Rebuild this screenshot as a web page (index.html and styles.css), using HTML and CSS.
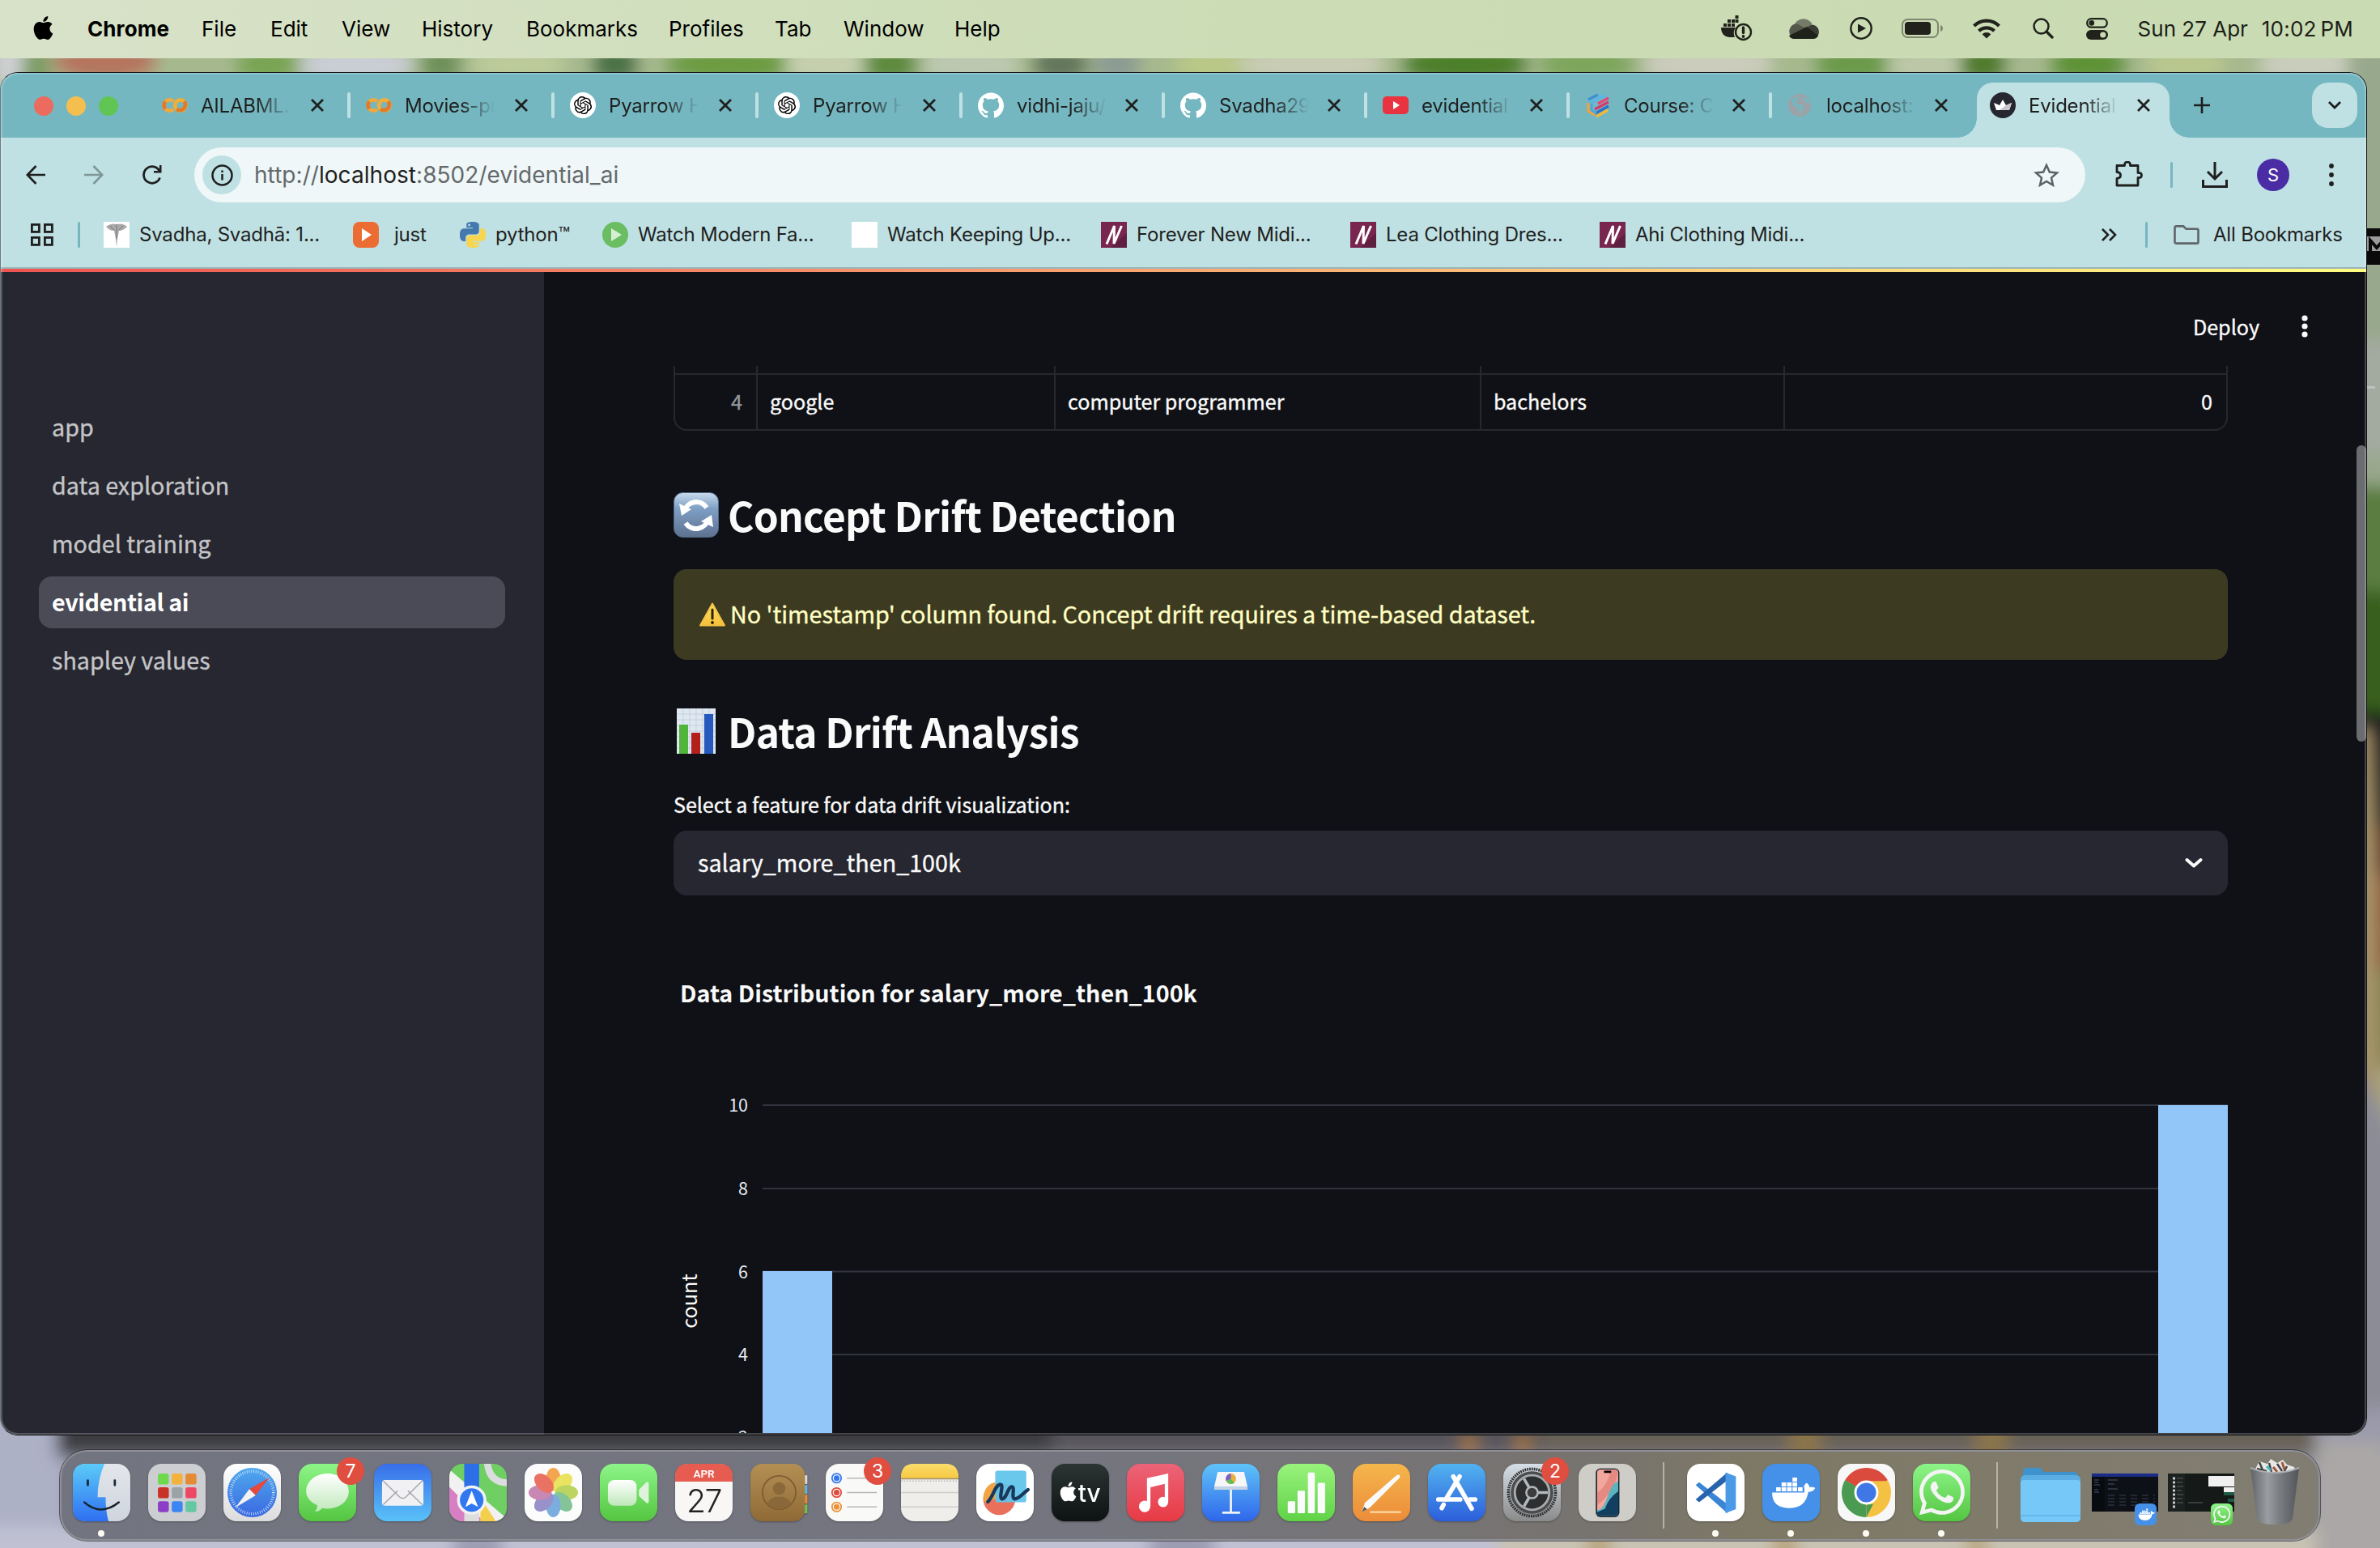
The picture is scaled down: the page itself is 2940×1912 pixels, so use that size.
FILE: index.html
```html
<!DOCTYPE html>
<html lang="en">
<head>
<meta charset="utf-8">
<title>Evidential AI</title>
<link rel="stylesheet" href="styles.css">
</head>
<body>
<svg class="defs" width="0" height="0" aria-hidden="true">
  <defs>
    <linearGradient id="gGreen" x2="0" y2="1"><stop stop-color="#8df588"/><stop offset="1" stop-color="#54c541"/></linearGradient>
    <linearGradient id="gMail" x2="0" y2="1"><stop stop-color="#386ee9"/><stop offset="1" stop-color="#5ac2f8"/></linearGradient>
    <linearGradient id="gFinder" x2="0" y2="1"><stop stop-color="#5bcbf8"/><stop offset="1" stop-color="#2f6ff2"/></linearGradient>
    <linearGradient id="gFace" x2="0" y2="1"><stop stop-color="#e3e6ea"/><stop offset="1" stop-color="#ced5de"/></linearGradient>
    <linearGradient id="gWhite" x2="0" y2="1"><stop stop-color="#ffffff"/><stop offset="1" stop-color="#dcdcdc"/></linearGradient>
    <linearGradient id="gBubble" x2="0" y2="1"><stop stop-color="#ffffff"/><stop offset="1" stop-color="#bfe8ba"/></linearGradient>
    <linearGradient id="gSafari" x2="0" y2="1"><stop stop-color="#4fa9ee"/><stop offset="1" stop-color="#3a68e0"/></linearGradient>
    <linearGradient id="gTan" x2="0" y2="1"><stop stop-color="#b48f54"/><stop offset="1" stop-color="#8f6a36"/></linearGradient>
    <linearGradient id="gTv" x2="0" y2="1"><stop stop-color="#2b3533"/><stop offset="1" stop-color="#0e1213"/></linearGradient>
    <linearGradient id="gMusic" x2="0" y2="1"><stop stop-color="#ec6478"/><stop offset="1" stop-color="#e73a44"/></linearGradient>
    <linearGradient id="gKeynote" x2="0" y2="1"><stop stop-color="#5fc3f9"/><stop offset="1" stop-color="#2f66ea"/></linearGradient>
    <linearGradient id="gNumbers" x2="0" y2="1"><stop stop-color="#99f37c"/><stop offset="1" stop-color="#5fd247"/></linearGradient>
    <linearGradient id="gPages" x2="0" y2="1"><stop stop-color="#f5b64c"/><stop offset="1" stop-color="#ec8c39"/></linearGradient>
    <linearGradient id="gStore" x2="0" y2="1"><stop stop-color="#52b3f0"/><stop offset="1" stop-color="#2c5edb"/></linearGradient>
    <linearGradient id="gGear" x2="0" y2="1"><stop stop-color="#d6dfe6"/><stop offset="1" stop-color="#8a8a8a"/></linearGradient>
    <linearGradient id="gNotes" x2="0" y2="1"><stop stop-color="#fbdd6c"/><stop offset="1" stop-color="#f5c740"/></linearGradient>
    <linearGradient id="gTrash" x2="1" y2="0"><stop stop-color="#5f6367"/><stop offset=".35" stop-color="#9a9ea2"/><stop offset=".6" stop-color="#7a7e82"/><stop offset="1" stop-color="#515559"/></linearGradient>
    <linearGradient id="gRefresh" x2="0" y2="1"><stop stop-color="#c9dbec"/><stop offset=".35" stop-color="#7fa0c6"/><stop offset="1" stop-color="#5e7190"/></linearGradient>
    <linearGradient id="gWarn" x2="0" y2="1"><stop stop-color="#fde06a"/><stop offset="1" stop-color="#f6c036"/></linearGradient>
    <filter id="soft" x="-20%" y="-20%" width="140%" height="140%"><feGaussianBlur stdDeviation="10"/></filter>

    <symbol id="close" viewBox="0 0 16 16"><path d="M1 1l14 14M15 1L1 15" stroke="#1f1f1f" stroke-width="2.800" fill="none"/></symbol>
    <symbol id="github" viewBox="0 0 24 24"><path fill="#fff" d="M12 .297c-6.63 0-12 5.373-12 12 0 5.303 3.438 9.8 8.205 11.385.6.113.82-.258.82-.577 0-.285-.01-1.04-.015-2.04-3.338.724-4.042-1.61-4.042-1.61C4.422 18.07 3.633 17.7 3.633 17.7c-1.087-.744.084-.729.084-.729 1.205.084 1.838 1.236 1.838 1.236 1.07 1.835 2.809 1.305 3.495.998.108-.776.417-1.305.76-1.605-2.665-.3-5.466-1.332-5.466-5.93 0-1.31.465-2.38 1.235-3.22-.135-.303-.54-1.523.105-3.176 0 0 1.005-.322 3.3 1.23.96-.267 1.98-.399 3-.405 1.02.006 2.04.138 3 .405 2.28-1.552 3.285-1.23 3.285-1.23.645 1.653.24 2.873.12 3.176.765.84 1.23 1.91 1.23 3.22 0 4.61-2.805 5.625-5.475 5.92.42.36.81 1.096.81 2.22 0 1.606-.015 2.896-.015 3.286 0 .315.21.69.825.57C20.565 22.092 24 17.592 24 12.297c0-6.627-5.373-12-12-12"/></symbol>
    <symbol id="openai" viewBox="0 0 32 32"><circle cx="16" cy="16" r="16" fill="#fff"/><g transform="translate(5 5) scale(.92)"><path d="M22.2819 9.8211a5.9847 5.9847 0 0 0-.5157-4.9108 6.0462 6.0462 0 0 0-6.5098-2.9A6.0651 6.0651 0 0 0 4.9807 4.1818a5.9847 5.9847 0 0 0-3.9977 2.9 6.0462 6.0462 0 0 0 .7427 7.0966 5.98 5.98 0 0 0 .511 4.9107 6.051 6.051 0 0 0 6.5146 2.9001A5.9847 5.9847 0 0 0 13.2599 24a6.0557 6.0557 0 0 0 5.7718-4.2058 5.9894 5.9894 0 0 0 3.9977-2.9001 6.0557 6.0557 0 0 0-.7475-7.0729zm-9.022 12.6081a4.4755 4.4755 0 0 1-2.8764-1.0408l.1419-.0804 4.7783-2.7582a.7948.7948 0 0 0 .3927-.6813v-6.7369l2.02 1.1686a.071.071 0 0 1 .038.052v5.5826a4.504 4.504 0 0 1-4.4945 4.4944zm-9.6607-4.1254a4.4708 4.4708 0 0 1-.5346-3.0137l.142.0852 4.783 2.7582a.7712.7712 0 0 0 .7806 0l5.8428-3.3685v2.3324a.0804.0804 0 0 1-.0332.0615L9.74 19.9502a4.4992 4.4992 0 0 1-6.1408-1.6464zM2.3408 7.8956a4.485 4.485 0 0 1 2.3655-1.9728V11.6a.7664.7664 0 0 0 .3879.6765l5.8144 3.3543-2.0201 1.1685a.0757.0757 0 0 1-.071 0l-4.8303-2.7865A4.504 4.504 0 0 1 2.3408 7.872zm16.5963 3.8558L13.1038 8.364 15.1192 7.2a.0757.0757 0 0 1 .071 0l4.8303 2.7913a4.4944 4.4944 0 0 1-.6765 8.1042v-5.6772a.79.79 0 0 0-.407-.667zm2.0107-3.0231l-.142-.0852-4.7735-2.7818a.7759.7759 0 0 0-.7854 0L9.409 9.2297V6.8974a.0662.0662 0 0 1 .0284-.0615l4.8303-2.7866a4.4992 4.4992 0 0 1 6.6802 4.66zM8.3065 12.863l-2.02-1.1638a.0804.0804 0 0 1-.038-.0567V6.0742a4.4992 4.4992 0 0 1 7.3757-3.4537l-.142.0805L8.704 5.459a.7948.7948 0 0 0-.3927.6813zm1.0976-2.3654l2.602-1.4998 2.6069 1.4998v2.9994l-2.5974 1.4997-2.6067-1.4997Z"/></g></symbol>
    <symbol id="colab" viewBox="0 0 32 32"><g fill="none" stroke-width="4.800"><path d="M13.900 20.900A6.700 6.700 0 1 1 13.900 11.100" stroke="#f1a93a"/><path d="M4.300 20.500A6.700 6.700 0 0 1 4.300 11.500" stroke="#e37a2a"/><circle cx="22.800" cy="16" r="6.700" stroke="#f1ae38"/><path d="M27.500 11.300a6.700 6.700 0 0 1-9.400 9.400" stroke="#e37a2a"/></g></symbol>
    <symbol id="forever" viewBox="0 0 32 32"><rect width="32" height="32" fill="#78264f"/><path d="M32 14v18H12z" fill="#5e1f40"/><path d="M7 27.500L16.500 5 16 27l9.500-22" fill="none" stroke="#fff" stroke-width="3"/></symbol>
    <symbol id="python" viewBox="0 0 24 24"><path fill="#4479ad" d="M14.25.18l.9.2.73.26.59.3.45.32.34.34.25.34.16.33.1.3.04.26.02.2-.01.13V8.5l-.05.63-.13.55-.21.46-.26.38-.3.31-.33.25-.35.19-.35.14-.33.1-.3.07-.26.04-.21.02H8.77l-.69.05-.59.14-.5.22-.41.27-.33.32-.27.35-.2.36-.15.37-.1.35-.07.32-.04.27-.02.21v3.06H3.17l-.21-.03-.28-.07-.32-.12-.35-.18-.36-.26-.36-.36-.35-.46-.32-.59-.28-.73-.21-.88-.14-1.05-.05-1.23.06-1.22.16-1.04.24-.87.32-.71.36-.57.4-.44.42-.33.42-.24.4-.16.36-.1.32-.05.24-.01h.16l.06.01h8.16v-.83H6.18l-.01-2.75-.02-.37.05-.34.11-.31.17-.28.25-.26.31-.23.38-.2.44-.18.51-.15.58-.12.64-.1.71-.06.77-.04.84-.02 1.27.05zm-6.3 1.98l-.23.33-.08.41.08.41.23.34.33.22.41.09.41-.09.33-.22.23-.34.08-.41-.08-.41-.23-.33-.33-.22-.41-.09-.41.09z"/><path transform="rotate(180 12 12)" fill="#f8d54e" d="M14.25.18l.9.2.73.26.59.3.45.32.34.34.25.34.16.33.1.3.04.26.02.2-.01.13V8.5l-.05.63-.13.55-.21.46-.26.38-.3.31-.33.25-.35.19-.35.14-.33.1-.3.07-.26.04-.21.02H8.77l-.69.05-.59.14-.5.22-.41.27-.33.32-.27.35-.2.36-.15.37-.1.35-.07.32-.04.27-.02.21v3.06H3.17l-.21-.03-.28-.07-.32-.12-.35-.18-.36-.26-.36-.36-.35-.46-.32-.59-.28-.73-.21-.88-.14-1.05-.05-1.23.06-1.22.16-1.04.24-.87.32-.71.36-.57.4-.44.42-.33.42-.24.4-.16.36-.1.32-.05.24-.01h.16l.06.01h8.16v-.83H6.18l-.01-2.75-.02-.37.05-.34.11-.31.17-.28.25-.26.31-.23.38-.2.44-.18.51-.15.58-.12.64-.1.71-.06.77-.04.84-.02 1.27.05zm-6.3 1.98l-.23.33-.08.41.08.41.23.34.33.22.41.09.41-.09.33-.22.23-.34.08-.41-.08-.41-.23-.33-.33-.22-.41-.09-.41.09z"/></symbol>
    <symbol id="whatsapp" viewBox="0 0 100 100"><rect width="100" height="100" rx="23" fill="url(#gGreen)"/><g transform="translate(11 10) scale(3.3)"><path fill="#f4f4f4" d="M17.472 14.382c-.297-.149-1.758-.867-2.03-.967-.273-.099-.471-.148-.67.15-.197.297-.767.966-.94 1.164-.173.199-.347.223-.644.075-.297-.15-1.255-.463-2.39-1.475-.883-.788-1.48-1.761-1.653-2.059-.173-.297-.018-.458.13-.606.134-.133.298-.347.446-.52.149-.174.198-.298.298-.497.099-.198.05-.371-.025-.52-.075-.149-.669-1.612-.916-2.207-.242-.579-.487-.5-.669-.51-.173-.008-.371-.01-.57-.01-.198 0-.52.074-.792.372-.272.297-1.04 1.016-1.04 2.479 0 1.462 1.065 2.875 1.213 3.074.149.198 2.096 3.2 5.077 4.487.709.306 1.262.489 1.694.625.712.227 1.36.195 1.871.118.571-.085 1.758-.719 2.006-1.413.248-.694.248-1.289.173-1.413-.074-.124-.272-.198-.57-.347m-5.421 7.403h-.004a9.87 9.87 0 01-5.031-1.378l-.361-.214-3.741.982.998-3.648-.235-.374a9.86 9.86 0 01-1.51-5.26c.001-5.45 4.436-9.884 9.888-9.884 2.64 0 5.122 1.03 6.988 2.898a9.825 9.825 0 012.893 6.994c-.003 5.45-4.437 9.884-9.885 9.884m8.413-18.297A11.815 11.815 0 0012.05 0C5.495 0 .16 5.335.157 11.892c0 2.096.547 4.142 1.588 5.945L.057 24l6.305-1.654a11.882 11.882 0 005.683 1.448h.005c6.554 0 11.89-5.335 11.893-11.893a11.821 11.821 0 00-3.48-8.413z"/></g></symbol>
    <symbol id="docker" viewBox="0 0 100 100"><rect width="100" height="100" rx="23" fill="#4590e8"/><path fill="#fff" d="M17 50h56c0-5 1-8-1-11 2-2 3-5 5-6 3 2 5 5 5 8 4-1 8 0 10 1-2 5-7 7-12 7-3 18-13 28-32 28-20 0-31-8-31-27z"/><g fill="#fff"><path d="M24 41h8v7h-8zM33.500 41h8v7h-8zM43 41h8v7h-8zM52.500 41h8v7h-8zM62 41h8v7h-8zM33.500 32.500h8v7h-8zM43 32.500h8v7h-8zM52.500 32.500h8v7h-8zM52.500 24h8v7h-8z"/></g></symbol>
    <symbol id="apple" viewBox="0 0 24 24"><path d="M12.152 6.896c-.948 0-2.415-1.078-3.96-1.04-2.04.027-3.91 1.183-4.961 3.014-2.117 3.675-.546 9.103 1.519 12.09 1.013 1.454 2.208 3.09 3.792 3.039 1.52-.065 2.09-.987 3.935-.987 1.831 0 2.35.987 3.96.948 1.637-.026 2.676-1.48 3.676-2.948 1.156-1.688 1.636-3.325 1.662-3.415-.039-.013-3.182-1.221-3.22-4.857-.026-3.04 2.48-4.494 2.597-4.559-1.429-2.09-3.623-2.324-4.39-2.376-2-.156-3.675 1.09-4.61 1.09zM15.53 3.83c.843-1.012 1.4-2.427 1.245-3.83-1.207.052-2.662.805-3.532 1.818-.78.896-1.454 2.338-1.273 3.714 1.338.104 2.715-.688 3.559-1.701"/></symbol>
  </defs>
</svg>

<div class="desktop">
  <svg class="wallpaper" viewBox="0 0 2940 1912" aria-hidden="true">
    <rect width="2940" height="1912" fill="#a9b592"/>
    <g filter="url(#soft)">
      <rect x="0" y="60" width="2940" height="60" fill="#a6b98e"/>
      <ellipse cx="10" cy="80" rx="20" ry="30" fill="#cfd0d4"/>
      <ellipse cx="45" cy="85" rx="18" ry="30" fill="#7b9b63"/>
      <ellipse cx="130" cy="76" rx="65" ry="26" fill="#b5745f"/>
      <ellipse cx="330" cy="80" rx="40" ry="24" fill="#79a453"/>
      <ellipse cx="440" cy="80" rx="70" ry="30" fill="#c9cdd4"/>
      <ellipse cx="545" cy="80" rx="26" ry="24" fill="#6d9058"/>
      <ellipse cx="640" cy="80" rx="60" ry="24" fill="#bccb9a"/>
      <ellipse cx="760" cy="80" rx="30" ry="24" fill="#4b7147"/>
      <ellipse cx="900" cy="80" rx="80" ry="24" fill="#6c9b3f"/>
      <ellipse cx="1020" cy="80" rx="50" ry="30" fill="#c5cfae"/>
      <ellipse cx="1100" cy="80" rx="34" ry="24" fill="#5d8a3c"/>
      <ellipse cx="1200" cy="80" rx="60" ry="28" fill="#bcc9b0"/>
      <ellipse cx="1310" cy="80" rx="36" ry="24" fill="#64775c"/>
      <ellipse cx="1380" cy="80" rx="30" ry="24" fill="#8b9b93"/>
      <ellipse cx="1500" cy="80" rx="50" ry="24" fill="#b9c887"/>
      <ellipse cx="1620" cy="80" rx="90" ry="30" fill="#c8ccb4"/>
      <ellipse cx="1810" cy="80" rx="80" ry="28" fill="#4d8029"/>
      <ellipse cx="1960" cy="80" rx="60" ry="24" fill="#7da65c"/>
      <ellipse cx="2110" cy="80" rx="80" ry="30" fill="#cbccbc"/>
      <ellipse cx="2290" cy="80" rx="50" ry="24" fill="#6b9a48"/>
      <ellipse cx="2380" cy="80" rx="50" ry="24" fill="#bcc8a8"/>
      <ellipse cx="2450" cy="80" rx="30" ry="24" fill="#4f7a2c"/>
      <ellipse cx="2580" cy="80" rx="50" ry="24" fill="#5d9236"/>
      <ellipse cx="2700" cy="80" rx="50" ry="24" fill="#b9c78e"/>
      <ellipse cx="2850" cy="80" rx="60" ry="30" fill="#c9cdbc"/>
      <rect x="2900" y="60" width="60" height="600" fill="#98a88c"/>
      <rect x="2900" y="420" width="60" height="140" fill="#a3aaa0"/>
      <rect x="2900" y="600" width="60" height="260" fill="#5a7d40"/>
      <rect x="2900" y="730" width="60" height="150" fill="#375e1c"/>
      <rect x="2900" y="880" width="60" height="150" fill="#14161c"/>
      <rect x="2900" y="1020" width="60" height="60" fill="#5b2a1c"/>
      <rect x="2900" y="1080" width="60" height="140" fill="#8d5336"/>
      <rect x="2900" y="1200" width="60" height="120" fill="#7b8050"/>
      <path d="M2900 900h28l8 180 2 200 10 120h-48z" fill="#a8946c"/>
      <path d="M2900 1300l60 100v400h-60z" fill="#8c8c96"/>
      <path d="M-40 1740H2980V1950H-40z" fill="#9a9aac"/>
      <path d="M-40 1740H80V1950H-40z" fill="#adb1c6"/>
      <path d="M70 1740H1300V1800H70z" fill="#3c3d43"/>
      <path d="M1300 1740H2000V1800H1300z" fill="#58575c"/>
      <path d="M1900 1740H2860V1800H1900z" fill="#676259"/>
      <path d="M2860 1780h90v172h-90z" fill="#aaa7a6"/>
      <path d="M-40 1885h1940v60H-40z" fill="#c0c1d3"/>
      <path d="M1850 1885h1010v60H1850z" fill="#c8c3b3"/>
      <path d="M560 1890h60v60h-60zM1420 1885h80v60h-80z" fill="#9c9cb2"/>
      <path d="M1806 1774h18v20h-18zM1872 1774h18v20h-18z" fill="#b07a2c"/>
      <path d="M2210 1740h40v80h-40zM2440 1740h40v80h-40z" fill="#8a754c"/>
      <path d="M1960 1885h30v60h-30zM2190 1885h30v60h-30zM2430 1885h24v60h-24z" fill="#b9a67f"/>
    </g>
    <rect x="2920" y="282" width="20" height="45" fill="#0a0a0a"/>
    <rect x="2924" y="292" width="16" height="18" fill="#9b9b9b"/>
    <path d="M2928 310v-13l8 9 8-9" fill="none" stroke="#0a0a0a" stroke-width="4"/>
    <rect x="2924" y="477" width="10" height="3" fill="#c0c0c0"/>
  </svg>

  <header class="menubar">
    <svg class="apple" width="29" height="33"><use href="#apple"/></svg>
    <nav class="menus">
      <b>Chrome</b><span>File</span><span>Edit</span><span>View</span><span>History</span><span>Bookmarks</span><span>Profiles</span><span>Tab</span><span>Window</span><span>Help</span>
    </nav>
    <div class="status">
      <svg width="40" height="34" viewBox="0 0 40 34"><g fill="#20221b"><path d="M3 11h4v4H3zM8 11h4v4H8zM13 11h4v4h-4zM8 6h4v4H8zM13 6h4v4h-4zM17.500 6h4v4h-4zM17.500 1h4v4h-4z"/><path d="M0 16h18a12 12 0 0 0-1 12H11C4 28 0 23 0 16z"/></g><circle cx="27.500" cy="21.500" r="9.500" fill="none" stroke="#20221b" stroke-width="2.400"/><path d="M27.500 16v6.500" stroke="#20221b" stroke-width="3.400" stroke-linecap="round"/><circle cx="27.500" cy="27" r="1.900" fill="#20221b"/></svg>
      <svg width="40" height="28" viewBox="0 0 40 28"><path d="M9 12a12 12 0 0 1 23-2l-8 4z" fill="#747c68"/><path d="M9 27A10 10 0 0 1 12 8l14 7L4 24z" fill="#53584a"/><path d="M25 13q5-4 9-3a9 9 0 0 1 4 14z" fill="#3a3d33"/><path d="M3 23l22-11 14 11q-2 4-6 4H9q-4 0-6-4z" fill="#1f211b"/></svg>
      <svg width="28" height="28" viewBox="0 0 28 28"><circle cx="14" cy="14" r="12.700" fill="none" stroke="#20221b" stroke-width="2.500"/><path d="M10 8.500l10 5.500-10 5.500z" fill="#20221b"/></svg>
      <svg width="51" height="24" viewBox="0 0 51 24"><rect x="1" y="1" width="44" height="22" rx="6.500" fill="none" stroke="#7f876f" stroke-width="2"/><rect x="4" y="4" width="32" height="16" rx="4" fill="#20221b"/><path d="M48 8q3 1 3 4t-3 4z" fill="#7f876f"/></svg>
      <svg width="34" height="25" viewBox="0 0 34 25"><g fill="none" stroke="#20221b" stroke-width="4.200"><path d="M1.500 9a22 22 0 0 1 31 0"/><path d="M7.500 15.300a13.500 13.500 0 0 1 19 0"/></g><path d="M17 24.500l-5.400-5.300a8 8 0 0 1 10.800 0z" fill="#20221b"/></svg>
      <svg width="26" height="26" viewBox="0 0 26 26"><circle cx="10.500" cy="10.500" r="9" fill="none" stroke="#20221b" stroke-width="2.500"/><path d="M17 17l7 7" stroke="#20221b" stroke-width="3.400" stroke-linecap="round"/></svg>
      <svg width="27" height="27" viewBox="0 0 27 27"><rect x="1.200" y="1.200" width="24.600" height="10.400" rx="5.200" fill="none" stroke="#20221b" stroke-width="2.300"/><circle cx="6.800" cy="6.400" r="3.300" fill="#20221b"/><rect y="15" width="27" height="12" rx="6" fill="#20221b"/><circle cx="20.800" cy="21" r="3.600" fill="#cadbb3"/></svg>
      <span class="date">Sun 27 Apr</span><span class="time">10:02&#8201;PM</span>
    </div>
  </header>

  <section class="window">
    <div class="tabstrip">
      <div class="lights"><i class="red"></i><i class="yellow"></i><i class="green"></i></div>
      <div class="tab wide"><svg class="fav"><use href="#colab"/></svg><span>AILABML.</span><svg class="x"><use href="#close"/></svg></div>
      <div class="tab wide"><svg class="fav"><use href="#colab"/></svg><span>Movies-pr</span><svg class="x"><use href="#close"/></svg></div>
      <div class="tab wide"><svg class="fav"><use href="#openai"/></svg><span>Pyarrow H</span><svg class="x"><use href="#close"/></svg></div>
      <div class="tab wide"><svg class="fav"><use href="#openai"/></svg><span>Pyarrow H</span><svg class="x"><use href="#close"/></svg></div>
      <div class="tab"><svg class="fav"><use href="#github"/></svg><span>vidhi-jaju/</span><svg class="x"><use href="#close"/></svg></div>
      <div class="tab"><svg class="fav"><use href="#github"/></svg><span>Svadha29</span><svg class="x"><use href="#close"/></svg></div>
      <div class="tab"><svg class="fav" viewBox="0 0 32 32"><rect y="5" width="32" height="22" rx="5" fill="#ea3340"/><path d="M13 11l8 5-8 5z" fill="#fff"/></svg><span>evidential</span><svg class="x"><use href="#close"/></svg></div>
      <div class="tab"><svg class="fav" viewBox="0 0 32 32"><g fill="none" stroke-width="3.200"><path d="M4 9l12-6" stroke="#3c8fd6"/><path d="M4 14L25 4" stroke="#59b6e8"/><path d="M16 14L29 7" stroke="#e8457c"/><path d="M12 21L29 12" stroke="#d63a6d"/><path d="M13 26L29 17" stroke="#2f6fc4"/><path d="M4 13v10l8 5" stroke="#f2a33a"/><path d="M8 14v8l6 4" stroke="#49a7e2"/><path d="M14 30l14-8" stroke="#f0b93a"/></g></svg><span>Course: C</span><svg class="x"><use href="#close"/></svg></div>
      <div class="tab last"><svg class="fav" viewBox="0 0 32 32"><circle cx="15" cy="16" r="14" fill="#9ba3a8"/><path d="M5 10q3-4 8-5l1 3-4 4 3 3h5l2 4-3 3v5l-3-3-1-5-5-2z" fill="#74b7c0"/><path d="M20 5q6 3 8 9l-4-1-4-4z" fill="#74b7c0"/></svg><span>localhost:</span><svg class="x"><use href="#close"/></svg></div>
      <div class="tab active"><svg class="fav" viewBox="0 0 32 32"><circle cx="16" cy="16" r="16" fill="#262730"/><path d="M5 13l7 3 4-7 4 7 7-3-3 9H8z" fill="#fff"/><path d="M16 9l4 7-8 6h12l3-9-7 3z" fill="#c8c8cc"/></svg><span>Evidential</span><svg class="x"><use href="#close"/></svg></div>
      <svg class="plus" width="20" height="20" viewBox="0 0 20 20"><path d="M10 0v20M0 10h20" stroke="#1f1f1f" stroke-width="2.600"/></svg>
      <div class="tabsearch"><svg width="16" height="12" viewBox="0 0 16 12"><path d="M1 2l7 7 7-7" fill="none" stroke="#1f1f1f" stroke-width="2.800"/></svg></div>
    </div>

    <div class="toolbar">
      <svg width="24" height="24" viewBox="0 0 24 24"><path d="M24 12H2M12.500 1L1.800 12l10.700 11" fill="none" stroke="#1f1f1f" stroke-width="2.700"/></svg>
      <svg width="24" height="24" viewBox="0 0 24 24"><path d="M0 12h22M11.500 1l10.700 11-10.700 11" fill="none" stroke="#7f9799" stroke-width="2.700"/></svg>
      <svg width="24" height="24" viewBox="0 0 24 24"><path d="M21.500 15.500A10.300 10.300 0 1 1 21 7.300" fill="none" stroke="#1f1f1f" stroke-width="2.700"/><path d="M23.500 0v9.500H14V7h7V0z" fill="#1f1f1f"/></svg>
      <div class="omnibox">
        <div class="info"><svg width="27" height="27" viewBox="0 0 27 27"><circle cx="13.500" cy="13.500" r="12" fill="none" stroke="#1f1f1f" stroke-width="2.500"/><path d="M13.500 12v7.500M13.500 7.500v2.600" stroke="#1f1f1f" stroke-width="2.500"/></svg></div>
        <p class="url">http://<b>localhost</b>:8502/evidential_ai</p>
        <svg class="star" width="32" height="30" viewBox="0 0 32 30"><path d="M16 3l3.800 8.500 9.200.9-7 6.200 2 9.100-8-4.800-8 4.800 2-9.100-7-6.200 9.200-.9z" fill="none" stroke="#5b6366" stroke-width="2.500"/></svg>
      </div>
      <svg class="ext" width="34" height="32" viewBox="0 0 34 32"><path d="M2 5.500h9.500q-.5-4.300 3.500-4.300t3.500 4.300H28v9q4.500-.5 4.500 3t-4.500 3V30H2v-8.500q4.500-.5 4.500-4t-4.500-4z" fill="none" stroke="#1f1f1f" stroke-width="2.800" stroke-linejoin="round"/></svg>
      <i class="rule"></i>
      <svg class="dl" width="32" height="32" viewBox="0 0 32 32"><path d="M16 0v20M7 12l9 9 9-9" fill="none" stroke="#1f1f1f" stroke-width="3"/><path d="M1.500 22v8.500h29V22" fill="none" stroke="#1f1f1f" stroke-width="3"/></svg>
      <span class="avatar">S</span>
      <svg class="more" width="6" height="30" viewBox="0 0 6 30"><g fill="#1f1f1f"><circle cx="3" cy="4" r="2.900"/><circle cx="3" cy="15" r="2.900"/><circle cx="3" cy="26" r="2.900"/></g></svg>
    </div>

    <div class="bookmarks">
      <svg class="apps" width="28" height="28" viewBox="0 0 28 28"><g fill="none" stroke="#1f1f1f" stroke-width="2.800"><rect x="1.400" y="1.400" width="9" height="9"/><rect x="17.400" y="1.400" width="9" height="9"/><rect x="1.400" y="17.400" width="9" height="9"/><rect x="17.400" y="17.400" width="9" height="9"/></g></svg>
      <i class="rule"></i>
      <div class="bm"><svg viewBox="0 0 32 32"><rect width="32" height="32" fill="#fff"/><path d="M3 6q6-5 13-3 8-2 13 3-5 5-10 5l-2 10-1 10-1-10-2-10Q7 11 3 6z" fill="#a9a9a9"/><path d="M8 5l5 5M24 5l-5 5M16 3v18" stroke="#777" fill="none"/></svg><span>Svadha, Svadhā: 1...</span></div>
      <div class="bm just"><svg viewBox="0 0 32 32"><rect width="32" height="32" rx="8" fill="#ec6d33"/><path d="M11 8l12 8-12 8z" fill="#fff"/></svg><span>just</span></div>
      <div class="bm py"><svg viewBox="0 0 24 24"><use href="#python"/></svg><span>python™</span></div>
      <div class="bm"><svg viewBox="0 0 32 32"><circle cx="16" cy="16" r="16" fill="#6bbd62"/><path d="M11 8l13 8-13 8z" fill="#d5efd2"/></svg><span>Watch Modern Fa...</span></div>
      <div class="bm"><svg viewBox="0 0 32 32"><rect width="32" height="32" fill="#fff"/></svg><span>Watch Keeping Up...</span></div>
      <div class="bm"><svg><use href="#forever"/></svg><span>Forever New Midi...</span></div>
      <div class="bm"><svg><use href="#forever"/></svg><span>Lea Clothing Dres...</span></div>
      <div class="bm"><svg><use href="#forever"/></svg><span>Ahi Clothing Midi...</span></div>
      <svg class="overflow" width="20" height="16" viewBox="0 0 20 16"><path d="M2 1l7 7-7 7M11 1l7 7-7 7" fill="none" stroke="#1f1f1f" stroke-width="2.600"/></svg>
      <i class="rule far"></i>
      <svg class="folder" width="32" height="24" viewBox="0 0 32 24"><path d="M1.500 3q0-1.600 1.600-1.600H12l3.500 3.400h13.400q1.600 0 1.600 1.600V21q0 1.600-1.600 1.600H3.100Q1.500 22.600 1.500 21z" fill="none" stroke="#5f6568" stroke-width="2.600"/></svg>
      <span class="all">All Bookmarks</span>
    </div>

    <div class="page">
      <aside class="sidebar">
        <a>app</a><a>data exploration</a><a>model training</a><a class="current">evidential ai</a><a>shapley values</a>
      </aside>
      <main class="content">
        <div class="apphead"><span>Deploy</span><svg width="8" height="28" viewBox="0 0 8 28"><g fill="#fafafa"><circle cx="4" cy="4" r="3.600"/><circle cx="4" cy="14" r="3.600"/><circle cx="4" cy="24" r="3.600"/></g></svg></div>
        <div class="table">
          <div class="row stub"><span></span><span></span><span></span><span></span><span></span></div>
          <div class="row"><span class="idx">4</span><span>google</span><span>computer programmer</span><span>bachelors</span><span class="num">0</span></div>
        </div>
        <h3 class="h-concept"><svg width="56" height="56" viewBox="0 0 56 56"><rect x=".5" y=".5" width="55" height="55" rx="11" fill="url(#gRefresh)" stroke="#4f6788"/><g fill="none" stroke="#fff" stroke-width="6"><path d="M13 24a15.500 15.500 0 0 1 28-5"/><path d="M43 33a15.500 15.500 0 0 1-28 5"/></g><path d="M7 14l3 15 12-8zM49 43l-2-15-13 8z" fill="#fff"/></svg><span>Concept Drift Detection</span></h3>
        <div class="alert"><svg width="32" height="30" viewBox="0 0 32 30"><path d="M16 1.500L31 28.500H1z" fill="url(#gWarn)" stroke="#f3c244" stroke-width="2" stroke-linejoin="round"/><path d="M16 9v11" stroke="#2a2306" stroke-width="3" stroke-linecap="round"/><circle cx="16" cy="25" r="1.900" fill="#2a2306"/></svg><span>No 'timestamp' column found. Concept drift requires a time-based dataset.</span></div>
        <h3 class="h-data"><svg width="56" height="56" viewBox="0 0 56 56"><rect x="4" width="48" height="56" fill="#dfe8f1"/><path d="M4 7h48M4 14h48M4 21h48M4 28h48M4 35h48M4 42h48M4 49h48M12 0v56M20 0v56M28 0v56M36 0v56M44 0v56" stroke="#c3d0dd"/><rect x="7" y="20" width="11" height="36" fill="#52b53b"/><rect x="22" y="30" width="11" height="26" fill="#b3201c"/><rect x="38" y="7" width="11" height="49" fill="#2559bd"/></svg><span>Data Drift Analysis</span></h3>
        <label class="lbl">Select a feature for data drift visualization:</label>
        <div class="select"><span>salary_more_then_100k</span><svg width="22" height="14" viewBox="0 0 22 14"><path d="M2.500 3L11 10.500 19.500 3" fill="none" stroke="#fafafa" stroke-width="4" stroke-linecap="round" stroke-linejoin="round"/></svg></div>
        <svg class="chart" width="1920" height="620" viewBox="832 1150 1920 620">
          <text class="ctitle" x="840" y="1238">Data Distribution for salary_more_then_100k</text>
          <path d="M942 1365H2752M942 1468H2752M942 1570.500H2752M942 1673H2752" stroke="#31333f" stroke-width="2"/>
          <rect x="942" y="1570" width="86" height="204" fill="#92c5f8"/>
          <rect x="2666" y="1365" width="86" height="409" fill="#92c5f8"/>
          <g class="tick"><text x="924" y="1373">10</text><text x="924" y="1476">8</text><text x="924" y="1578.500">6</text><text x="924" y="1681">4</text><text x="924" y="1783">2</text></g>
          <text class="axis" transform="translate(861 1607) rotate(-90)">count</text>
        </svg>
        <i class="scroll"></i>
      </main>
    </div>
  </section>

  <footer class="dock">
    <span class="app run"><svg viewBox="0 0 100 100"><rect width="100" height="100" rx="23" fill="url(#gFace)"/><path d="M23 0h32Q43 28 43 58h14q0 24 5 42H23Q0 100 0 77V23Q0 0 23 0z" fill="url(#gFinder)"/><path d="M26 29v8M73 29v8" stroke="#1b2b3a" stroke-width="4" stroke-linecap="round"/><path d="M20 67q29 25 60 0" fill="none" stroke="#17222e" stroke-width="3.500" stroke-linecap="round"/></svg></span>
    <span class="app"><svg viewBox="0 0 100 100"><rect width="100" height="100" rx="23" fill="#cdced2"/><g><rect x="17" y="17" width="19" height="19" rx="4" fill="#6fd94c"/><rect x="41" y="17" width="19" height="19" rx="4" fill="#f3b23b"/><rect x="65" y="17" width="19" height="19" rx="4" fill="#e58a35"/><rect x="17" y="41" width="19" height="19" rx="4" fill="#c93226"/><rect x="41" y="41" width="19" height="19" rx="4" fill="#9ba3a7"/><rect x="65" y="41" width="19" height="19" rx="4" fill="#ec4864"/><rect x="17" y="65" width="19" height="19" rx="4" fill="#8a3fc6"/><rect x="41" y="65" width="19" height="19" rx="4" fill="#3b86f2"/><rect x="65" y="65" width="19" height="19" rx="4" fill="#64c9a2"/></g></svg></span>
    <span class="app"><svg viewBox="0 0 100 100"><rect width="100" height="100" rx="23" fill="url(#gWhite)"/><circle cx="50" cy="50" r="43" fill="url(#gSafari)"/><circle cx="50" cy="50" r="37" fill="none" stroke="#cfe4fb" stroke-width="5" stroke-dasharray="1.200 2.700"/><path d="M80 24L56 55 45 44z" fill="#e5483c"/><path d="M21 76l24-32 11 11z" fill="#f3f3f3"/></svg></span>
    <span class="app"><svg viewBox="0 0 100 100"><rect width="100" height="100" rx="23" fill="url(#gGreen)"/><path d="M50 17c21 0 37 14 37 31S71 78 50 78q-5 0-9-1-5 6-13 6 5-5 4-11C20 67 13 58 13 48 13 31 29 17 50 17z" fill="url(#gBubble)"/></svg><em>7</em></span>
    <span class="app"><svg viewBox="0 0 100 100"><rect width="100" height="100" rx="23" fill="url(#gMail)"/><rect x="14" y="28" width="72" height="45" rx="5" fill="#f1f1f3"/><path d="M16 71l25-24M84 71L59 47M16 30l29 28q5 4 10 0l29-28" fill="none" stroke="#a2a6ad" stroke-width="2"/></svg></span>
    <span class="app"><svg viewBox="0 0 100 100"><clipPath id="mapc"><rect width="100" height="100" rx="23"/></clipPath><g clip-path="url(#mapc)"><rect width="100" height="100" fill="#6fcf62"/><path d="M0 20l60 80H0z" fill="#d77fc2"/><path d="M0 10L100 95v5H60L0 40z" fill="#f1f1f1"/><path d="M26 60h26v40H26z" fill="#ddd"/><path d="M55 60l26 40H54z" fill="#f4cf4c"/><path d="M66-5q2 38 36 38" stroke="#dcdde0" stroke-width="12" fill="none"/><rect x="26" width="26" height="58" fill="#2d6fe6"/></g><circle cx="39" cy="63" r="23" fill="#2f78f0" stroke="#f1f1f4" stroke-width="5"/><path d="M39 47l11 28-11-6-11 6z" fill="#fff"/></svg></span>
    <span class="app"><svg viewBox="0 0 100 100"><rect width="100" height="100" rx="23" fill="#fcfcfc"/><g opacity=".88"><ellipse cx="50" cy="27" rx="13" ry="20" fill="#f29a38"/><ellipse cx="50" cy="27" rx="13" ry="20" fill="#e7e04a" transform="rotate(45 50 50)"/><ellipse cx="50" cy="27" rx="13" ry="20" fill="#b4cf4b" transform="rotate(90 50 50)"/><ellipse cx="50" cy="27" rx="13" ry="20" fill="#74bd8b" transform="rotate(135 50 50)"/><ellipse cx="50" cy="27" rx="13" ry="20" fill="#6aa4dc" transform="rotate(180 50 50)"/><ellipse cx="50" cy="27" rx="13" ry="20" fill="#8b83c4" transform="rotate(225 50 50)"/><ellipse cx="50" cy="27" rx="13" ry="20" fill="#c377a9" transform="rotate(270 50 50)"/><ellipse cx="50" cy="27" rx="13" ry="20" fill="#e8604f" transform="rotate(315 50 50)"/></g></svg></span>
    <span class="app"><svg viewBox="0 0 100 100"><rect width="100" height="100" rx="23" fill="url(#gGreen)"/><rect x="14" y="28" width="50" height="45" rx="11" fill="url(#gBubble)"/><path d="M68 45l13-13q4-2 4 3v30q0 5-4 3L68 56z" fill="#dff3dc"/></svg></span>
    <span class="app"><svg viewBox="0 0 100 100"><rect width="100" height="100" rx="23" fill="#f8f7f5"/><path d="M23 0h54q23 0 23 23v8H0v-8Q0 0 23 0z" fill="#e65c50"/><text x="50" y="24" class="apr">APR</text><text x="50" y="84" class="day">27</text></svg></span>
    <span class="app"><svg viewBox="0 0 100 100"><path d="M92 20h7v15h-7z" fill="#ddd"/><path d="M92 37h7v15h-7z" fill="#60b6ec"/><path d="M92 54h7v15h-7z" fill="#ee8a32"/><path d="M92 71h7v15h-7z" fill="#65c850"/><rect width="95" height="100" rx="21" fill="url(#gTan)"/><g fill="none" stroke="#7c5c30" stroke-width="2.500"><circle cx="50" cy="50" r="29"/></g><circle cx="50" cy="43" r="11" fill="#8a6839"/><path d="M29 69q5-12 21-12t21 12q-8 10-21 10t-21-10z" fill="#8a6839"/></svg></span>
    <span class="app"><svg viewBox="0 0 100 100"><rect width="100" height="100" rx="23" fill="#f9f9f7"/><path d="M37 25h52M37 50h52M37 75h52" stroke="#b8b8b8" stroke-width="2"/><g stroke-width="2.500" fill="none"><circle cx="19" cy="25" r="8" stroke="#3478f0"/><circle cx="19" cy="50" r="8" stroke="#e04b3d"/><circle cx="19" cy="75" r="8" stroke="#ec9338"/></g><circle cx="19" cy="25" r="5" fill="#3478f0"/><circle cx="19" cy="50" r="5" fill="#e04b3d"/><circle cx="19" cy="75" r="5" fill="#ec9338"/></svg><em>3</em></span>
    <span class="app"><svg viewBox="0 0 100 100"><rect width="100" height="100" rx="23" fill="#efeeeb"/><path d="M23 0h54q23 0 23 23v3H0v-3Q0 0 23 0z" fill="url(#gNotes)"/><path d="M0 26h100" stroke="#9e9170" stroke-width="2"/><path d="M0 30h100" stroke="#b5b5b5" stroke-width="2" stroke-dasharray="2 3"/><path d="M0 50h100M0 75h100" stroke="#cfcecb" stroke-width="2"/></svg></span>
    <span class="app"><svg viewBox="0 0 100 100"><rect width="100" height="100" rx="23" fill="#fff"/><circle cx="40" cy="61" r="28" fill="#e9705b"/><path d="M12 60q2-26 24-28l4 26-24 10z" fill="#f2a443"/><rect x="33" y="12" width="54" height="55" rx="4" fill="#5fc4ec" opacity=".93"/><path d="M20 66c10-8 12-30 22-30 7 0-4 24 3 25 8 0 10-22 17-21 6 1-2 20 5 21 8 0 12-8 23-16" fill="none" stroke="#17395c" stroke-width="6" stroke-linecap="round"/></svg></span>
    <span class="app"><svg viewBox="0 0 100 100"><rect width="100" height="100" rx="23" fill="url(#gTv)"/><g fill="#fff"><svg x="12" y="30" width="34" height="37" viewBox="0 0 24 24"><use href="#apple"/></svg><text x="46" y="66" class="tv">tv</text></g></svg></span>
    <span class="app"><svg viewBox="0 0 100 100"><rect width="100" height="100" rx="23" fill="url(#gMusic)"/><path d="M35 25l37-8v50a9 9 0 1 1-6-9V35l-25 6v33a10 10 0 1 1-6-9z" fill="#fff"/></svg></span>
    <span class="app"><svg viewBox="0 0 100 100"><rect width="100" height="100" rx="23" fill="url(#gKeynote)"/><path d="M27 14h46l6 26H21z" fill="#f6f6f8"/><path d="M21 40h58v5H21z" fill="#c7d3e2"/><path d="M48 45h4v38h-4zM35 83h31v4H35z" fill="#eef2f7"/><circle cx="50" cy="26" r="9" fill="#e8b13c"/><path d="M50 26V17a9 9 0 0 0-8 13z" fill="#7a5fc9"/><path d="M50 26l-8 4a9 9 0 0 0 14 3z" fill="#5fbd58"/></svg></span>
    <span class="app"><svg viewBox="0 0 100 100"><rect width="100" height="100" rx="23" fill="url(#gNumbers)"/><g fill="#fbfbfb"><rect x="18" y="65" width="13" height="21" rx="2"/><rect x="35" y="47" width="13" height="39" rx="2"/><rect x="53" y="15" width="12" height="71" rx="2"/><rect x="70" y="33" width="13" height="53" rx="2"/></g></svg></span>
    <span class="app"><svg viewBox="0 0 100 100"><rect width="100" height="100" rx="23" fill="url(#gPages)"/><path d="M16 84l5-16 54-47q8-5 7 3L30 76z" fill="#fafafa"/><path d="M16 84l4-9 5 4z" fill="#555"/><path d="M30 84h54" stroke="#fbd9a8" stroke-width="3"/></svg></span>
    <span class="app"><svg viewBox="0 0 100 100"><rect width="100" height="100" rx="23" fill="url(#gStore)"/><g stroke="#fff" stroke-width="8" stroke-linecap="round"><path d="M55 22L31 62M44 22l32 56M18 62h38M73 62h9M27 71l-3 6"/></g></svg></span>
    <span class="app"><svg viewBox="0 0 100 100"><rect width="100" height="100" rx="23" fill="url(#gGear)"/><circle cx="50" cy="50" r="41" fill="none" stroke="#2c2e30" stroke-width="5" stroke-dasharray="2.500 1.500"/><circle cx="50" cy="50" r="37" fill="#4a4c4e"/><circle cx="50" cy="50" r="30" fill="#2d2f31" stroke="#a9acae" stroke-width="4"/><path d="M50 50h28M50 50L36 26M50 50L36 74" stroke="#b5b8ba" stroke-width="5"/><circle cx="50" cy="50" r="10" fill="#3a3c3e" stroke="#b5b8ba" stroke-width="3.500"/></svg><em>2</em></span>
    <span class="app"><svg viewBox="0 0 100 100"><clipPath id="phonec"><rect x="32" y="10" width="37" height="81" rx="6"/></clipPath><rect width="100" height="100" rx="23" fill="#cfcdc8"/><rect x="30" y="8" width="41" height="85" rx="8" fill="#17222d"/><g clip-path="url(#phonec)"><rect x="32" y="10" width="37" height="81" fill="#f2a79c"/><path d="M69 14Q62 50 32 72V50Q50 40 56 10h13z" fill="#e58a82"/><path d="M69 30Q58 34 50 58T32 80v11h37z" fill="#5cb3c0"/><path d="M69 48Q52 60 46 78l-14 6v7h37z" fill="#123f5f"/></g><rect x="44" y="12" width="13" height="4" rx="2" fill="#000"/></svg></span>
    <i class="sep s1"></i>
    <span class="app run"><svg viewBox="0 0 100 100"><rect width="100" height="100" rx="23" fill="#fff"/><path d="M15 37l6-5 49 38v16z" fill="#3a86d4"/><path d="M15 62l6 5 49-38V15z" fill="#2863ae"/><path d="M67 15l18 7v57l-18 7z" fill="#4a9ae8"/></svg></span>
    <span class="app run"><svg viewBox="0 0 100 100"><use href="#docker"/></svg></span>
    <span class="app run"><svg viewBox="0 0 100 100"><rect width="100" height="100" rx="23" fill="#f7f7f7"/><path d="M50 50L12.800 28.500A43 43 0 0 1 87.200 28.500z" fill="#da4b3d"/><path d="M50 50L87.200 28.500A43 43 0 0 1 50 93z" fill="#f4c143"/><path d="M50 50v43A43 43 0 0 1 12.800 28.500z" fill="#4a9b51"/><path d="M50 30h38l-18 32zM50 93l20-34-20 6z" fill="#f4c143"/><path d="M13 28l19 33 18-10zM50 71l12-1-12 23z" fill="#4a9b51"/><circle cx="50" cy="50" r="21" fill="#fff"/><circle cx="50" cy="50" r="17" fill="#3f78e6"/></svg></span>
    <span class="app run"><svg viewBox="0 0 100 100"><use href="#whatsapp"/></svg></span>
    <i class="sep s2"></i>
    <svg class="dfolder" width="74" height="68" viewBox="0 0 74 68"><path d="M3 14V6q0-5 5-5h14q4 0 6 5h38q5 0 5 6v6H3z" fill="#3f93cd"/><path d="M0 16q0-6 6-6h62q6 0 6 6v46q0 6-6 6H6q-6 0-6-6z" fill="#5aaee4"/><path d="M0 20q0-4 4-4h66q4 0 4 4v42q0 6-6 6H6q-6 0-6-6z" fill="#76c8f9"/><path d="M0 60h74" stroke="#5fb2e6" stroke-width="1.500"/></svg>
    <span class="mini"><svg width="82" height="64" viewBox="0 0 82 64"><rect width="82" height="47" fill="#0d1117"/><rect width="82" height="4" fill="#1b2c86"/><rect y="4" width="16" height="43" fill="#080b10"/><path d="M3 8h6M3 11h5M3 14h7M3 20h5M3 23h6M20 8h12M20 13h8M20 19h12" stroke="#4a5568"/><path d="M20 27h58M20 31h58M20 35h58M20 39h58" stroke="#37404c" stroke-dasharray="8 6"/><svg x="53" y="37" width="27" height="27" viewBox="0 0 100 100"><use href="#docker"/></svg></svg></span>
    <span class="mini two"><svg width="82" height="64" viewBox="0 0 82 64"><rect width="82" height="47" fill="#151a18"/><rect width="21" height="47" fill="#1b211f"/><path d="M6 6h3M6 11h3M6 16h3M6 21h3M6 26h3M6 31h3M6 36h3M6 41h3" stroke="#c9c9c9" stroke-width="3"/><path d="M11 6h8M11 11h7M11 16h8M11 21h6M11 26h8M11 31h7M11 36h8M25 36h18" stroke="#59605d"/><path d="M50 3h32v13H50zM69 17h13v6H69z" fill="#f0f0f0"/><path d="M69 23h13v4H69zM74 31h8v4h-8z" fill="#1d5a41"/><svg x="53" y="37" width="27" height="27" viewBox="0 0 100 100"><use href="#whatsapp"/></svg></svg></span>
    <svg class="trash" width="62" height="82" viewBox="0 0 62 82"><path d="M5 16L12 3l10 3 4-6 8 5 7-4 5 6 9 3 3 10-26 4z" fill="#e7e7e5"/><path d="M12 4l5 12M24 5l3 11M34 6l6 9M46 9l-4 8M9 12l12 3" stroke="#444" stroke-width="2.500"/><path d="M29 10l5 6M40 4l3 9" stroke="#a5563c" stroke-width="3"/><path d="M21 9l5 5" stroke="#3fb3c4" stroke-width="3"/><path d="M1 11q30 12 60 0l-8 62q-1 8-22 8T9 73z" fill="url(#gTrash)"/><path d="M1 11q30 12 60 0" fill="none" stroke="#a9adb1" stroke-width="2"/></svg>
  </footer>
</div>
</body>
</html>
```
FILE: styles.css
```css
* { box-sizing: border-box; }
body { margin: 0; background: #9aa58a; }
.defs { position: absolute; }
svg { display: block; flex: none; }

.desktop {
  position: relative;
  width: 2940px;
  height: 1912px;
  overflow: hidden;
  display: flex;
  flex-direction: column;
  font-family: Inter, "Liberation Sans", sans-serif;
  color: #1f1f1f;
}
.wallpaper { position: absolute; inset: 0; width: 2940px; height: 1912px; }

/* menu bar */
.menubar {
  position: relative;
  flex: none;
  height: 72px;
  display: flex;
  align-items: center;
  padding: 0 33px 2px 39px;
  background: linear-gradient(90deg, #d8e2c9, #cdddb7 45%, #c9dbb3);
  font-size: 26px;
  color: #000;
  white-space: nowrap;
}
.apple { margin-top: -2px; }
.menus {
  margin-left: 40px;
  display: grid;
  grid-template-columns: 141px 85px 88px 99px 129px 176px 131px 85px 137px 80px;
}
.menus b { font-weight: 700; letter-spacing: .1px; }
.status { margin-left: auto; display: flex; align-items: center; color: #1c1e17; }
.status svg + svg { margin-left: 36px; }
.status svg:nth-of-type(2) { margin-left: 41px; }
.status svg:nth-of-type(3) { margin-left: 38px; }
.status svg:nth-of-type(5) { margin-left: 37px; }
.status svg:nth-of-type(6) { margin-left: 40px; }
.status svg:nth-of-type(7) { margin-left: 40px; }
.date { margin-left: 37px; }
.time { margin-left: 17px; letter-spacing: .2px; }

/* browser window */
.window {
  position: relative;
  flex: none;
  margin-top: 17px;
  width: 2924px;
  height: 1684px;
  border-radius: 22px;
  overflow: hidden;
  display: flex;
  flex-direction: column;
  background: #bfe1e3;
  border: 1px solid #111;
  border-left-color: #6d7a80;
}
.window::after {
  content: "";
  position: absolute;
  inset: 0;
  border-radius: 21px;
  box-shadow: inset 0 0 0 2px rgba(255, 255, 255, .22);
}
.tabstrip {
  flex: none;
  height: 80px;
  display: flex;
  align-items: flex-end;
  background: #74b7c0;
  padding-left: 41px;
  font-size: 24px;
}
.lights { display: flex; gap: 16px; align-self: flex-start; margin: 29px 38px 0 0; }
.lights i { width: 24px; height: 24px; border-radius: 50%; }
.red { background: #ed6a5e; }
.yellow { background: #f5bf4f; }
.green { background: #61c554; }
.tab {
  position: relative;
  flex: none;
  width: 250px;
  height: 68px;
  padding: 0 3px 12px 16px;
  display: flex;
  align-items: center;
}
.tab.wide { width: 252px; }
.tab::after { content: ""; width: 4px; height: 32px; border-radius: 2px; margin-left: auto; background: #bfe1e3; }
.tab.last::after, .tab.active::after { display: none; }
.tab .fav { width: 32px; height: 32px; }
.tab .x { width: 16px; height: 16px; margin-left: 16px; }
.tab.wide .x { margin-left: 18px; }
.tab span {
  width: 118px;
  margin-left: 16px;
  white-space: nowrap;
  letter-spacing: -.2px;
  -webkit-mask-image: linear-gradient(90deg, #000 58%, transparent 94%);
  mask-image: linear-gradient(90deg, #000 58%, transparent 94%);
}
.tab.active { width: 238px; background: #bfe1e3; border-radius: 20px 20px 0 0; }
.tab.active::before {
  content: "";
  position: absolute;
  left: -24px;
  right: -24px;
  bottom: 0;
  height: 24px;
  background:
    radial-gradient(circle at 0 0, transparent 23.500px, #bfe1e3 24px) left / 24px 24px no-repeat,
    radial-gradient(circle at 100% 0, transparent 23.500px, #bfe1e3 24px) right / 24px 24px no-repeat;
}
.plus { margin: 0 0 30px 30px; }
.tabsearch {
  margin: 0 11px 12px auto;
  width: 56px;
  height: 56px;
  border-radius: 20px;
  background: #bfe1e3;
  display: flex;
  align-items: center;
  justify-content: center;
}
.toolbar { flex: none; height: 92px; display: flex; align-items: center; padding-left: 31px; gap: 48px; }
.omnibox {
  flex: none;
  width: 2336px;
  height: 68px;
  margin-left: -8px;
  border-radius: 34px;
  background: #eff7f8;
  display: flex;
  align-items: center;
  padding: 0 32px 0 10px;
}
.info { width: 48px; height: 48px; border-radius: 50%; background: #bfe1e3; display: flex; align-items: center; justify-content: center; }
.url { margin: 0 0 1px 16px; font-size: 28px; color: #64696b; letter-spacing: .05px; }
.url b { font-weight: 400; color: #1f1f1f; }
.star { margin-left: auto; }
.rule { flex: none; width: 3px; height: 32px; border-radius: 2px; background: #74b7c0; }
.ext { margin: -2px 0 0 -11px; }
.toolbar .rule { margin-left: -14px; }
.dl { margin-left: -12px; }
.avatar { width: 40px; height: 40px; border-radius: 50%; margin-left: -12px; background: #4a2da5; color: #fff; font-size: 22px; line-height: 40px; text-align: center; }
.more { margin-left: 1px; }

.bookmarks { flex: none; height: 68px; padding: 0 0 12px 37px; display: flex; align-items: center; font-size: 24px; white-space: nowrap; letter-spacing: -.2px; }
.apps { margin-right: 30px; }
.bookmarks .rule { margin-right: 29px; }
.bm { flex: none; width: 308px; display: flex; align-items: center; gap: 12px; }
.bm svg { width: 32px; height: 32px; }
.bm span, .all { padding-bottom: 1px; }
.bm.just { width: 132px; gap: 19px; }
.bm.py { width: 176px; }
.overflow { margin-left: 311px; }
.bookmarks .far { margin: 0 32px 0 35px; }
.all { margin-left: 17px; }

/* web page */
.page {
  flex: 1;
  display: flex;
  min-height: 0;
  position: relative;
  padding-top: 6px;
  background: linear-gradient(90deg, #ef5552, #f7906a 35%, #fcc57a 67%, #fffd80) 0 2px / 100% 4px no-repeat, #9bb4b8;
  font-family: "Noto Sans CJK SC", "Open Sans", sans-serif;
  color: #fafafa;
  -webkit-text-stroke: .35px currentColor;
}
.sidebar { flex: none; width: 671px; background: #262730; padding: 160px 48px 0 47px; display: flex; flex-direction: column; gap: 8px; }
.sidebar a { height: 64px; line-height: 62px; padding-left: 16px; border-radius: 16px; font-size: 28.700px; color: #c4c4c7; }
.sidebar .current { background: #4a4b56; color: #fff; font-weight: 700; letter-spacing: -.4px; -webkit-text-stroke: 0; }
.content { position: relative; flex: 1; background: #0f1116; padding: 0 171px 0 160px; overflow: hidden; }
.apphead { height: 116px; padding-top: 18px; margin-right: -99px; display: flex; justify-content: flex-end; align-items: center; font-size: 25.100px; }
.apphead span { padding-bottom: 1px; }
.apphead svg { margin-left: 52px; }
.table { border: 2px solid #26282e; border-top: 0; border-radius: 0 0 16px 16px; width: 1920px; height: 80px; overflow: hidden; }
.row { display: grid; grid-template-columns: 102px 368px 526px 375px 1fr; height: 70px; border-top: 2px solid #26282e; font-size: 25.100px; line-height: 64px; }
.row.stub { height: 9px; border-top: 0; }
.row span { height: 70px; padding: 0 15px; border-right: 2px solid #26282e; }
.row span:last-child { border-right: 0; }
.row .idx { text-align: right; padding-right: 17px; color: #95979c; }
.row .num { text-align: right; padding-right: 17px; }
h3 { margin: 0; height: 56px; display: flex; align-items: center; gap: 11px; font-size: 49.600px; line-height: 54px; font-weight: 600; white-space: nowrap; letter-spacing: -.75px; -webkit-text-stroke: 0; }
h3 span { padding-bottom: 2px; }
.h-concept { margin-top: 76px; }
.h-data { margin-top: 60px; }
.alert { margin-top: 39px; height: 112px; border-radius: 16px; background: #3d3a22; color: #ffffc2; display: flex; align-items: center; gap: 6px; padding: 0 32px; font-size: 28.700px; letter-spacing: -.03px; }
.alert span { padding-bottom: 3px; }
.lbl { display: block; margin-top: 43px; height: 40px; line-height: 38px; font-size: 25.100px; letter-spacing: -.04px; }
.select { margin-top: 12px; height: 80px; border-radius: 16px; background: #262730; display: flex; align-items: center; justify-content: space-between; padding: 0 31px 0 30px; font-size: 28.700px; }
.select span { padding-bottom: 3px; }
.chart { margin-top: 44px; }
.chart text { fill: #fafafa; -webkit-text-stroke: 0; }
.ctitle { font-size: 28.700px; font-weight: 700; }
.chart .tick text { font-size: 21.500px; text-anchor: end; fill: #e6eaf1; }
.axis { font-size: 25.100px; text-anchor: middle; }
.scroll { position: absolute; right: 0; top: 214px; width: 12px; height: 366px; border-radius: 6px; background: #6b6c70; }

/* dock */
.dock {
  position: relative;
  flex: none;
  margin: 18px 0 0 74px;
  width: 2792px;
  height: 112px;
  border-radius: 34px;
  border: 2px solid #8f8f97;
  outline: 1px solid rgba(30, 30, 34, .6);
  background: linear-gradient(90deg, #72747f, #74757f 45%, #77736f 68%, #7e7965 75%, #817d72);
  display: flex;
  align-items: flex-start;
  padding: 15px 0 0 14px;
  gap: 23px;
}
.app { position: relative; flex: none; width: 70px; height: 71px; }
.app > svg { width: 71px; height: 71px; filter: drop-shadow(0 1px 1px rgba(0, 0, 0, .3)); }
.run::after { content: ""; position: absolute; left: 31px; top: 82px; width: 8px; height: 8px; border-radius: 50%; background: #fdfdf4; }
.app em {
  position: absolute;
  left: 47px;
  top: -8px;
  width: 34px;
  height: 34px;
  border-radius: 50%;
  background: #e04e40;
  color: #fff;
  font: 400 23px/34px Inter, sans-serif;
  text-align: center;
}
.apr { font: 600 19px Roboto, sans-serif; fill: #fff; text-anchor: middle; }
.day { font: 300 55px Inter, sans-serif; fill: #222; text-anchor: middle; letter-spacing: -2px; }
.tv { font: 500 42px Inter, sans-serif; }
.sep { flex: none; width: 2px; height: 82px; margin-top: -2px; background: #b4b2a8; }
.s1 { margin-left: 11px; margin-right: 5px; }
.s2 { margin-left: 10px; margin-right: 5px; }
.dfolder { margin-top: 4px; }
.mini { margin: 12px 0 0 -9px; }
.mini.two { margin-left: -11px; }
.trash { margin: -6px 0 0 -4px; }
```
